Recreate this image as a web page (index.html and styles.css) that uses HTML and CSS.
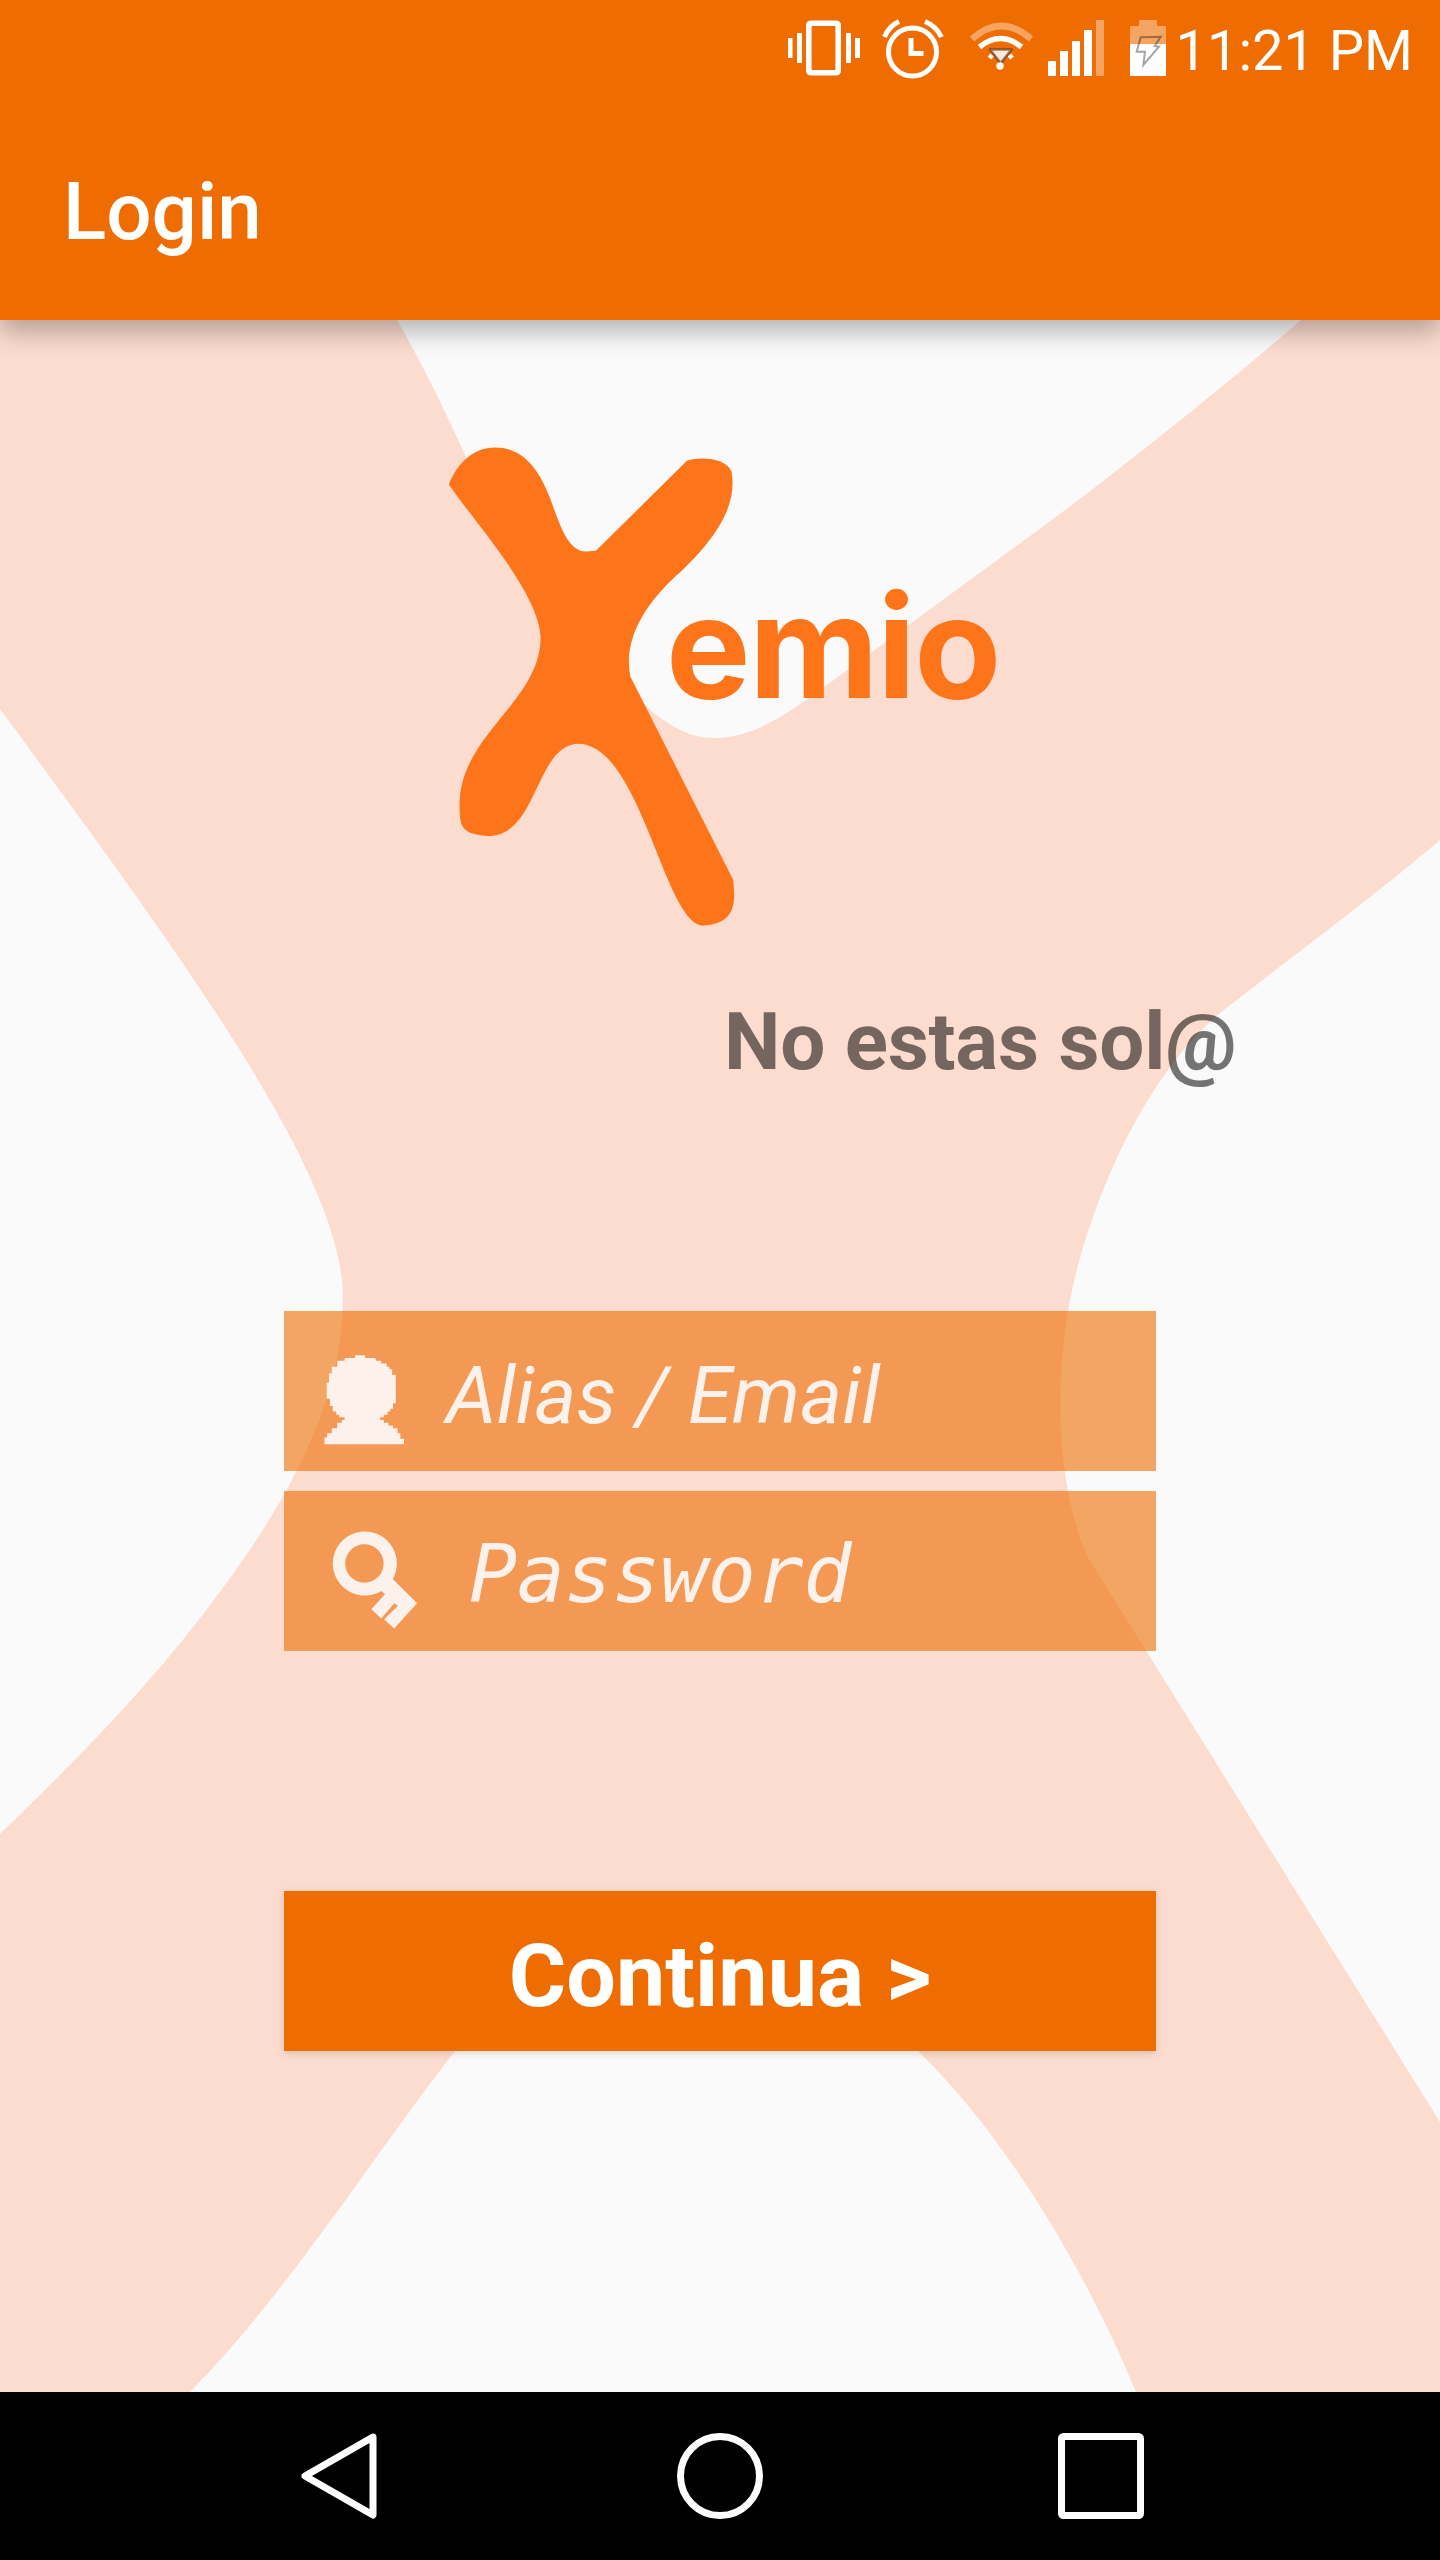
FILE: index.html
```html
<!DOCTYPE html>
<html lang="en">
<head>
  <meta charset="UTF-8" />
  <meta name="viewport" content="width=device-width, initial-scale=1.0"/>
  <title>Login</title>
  <link rel="stylesheet" href="styles.css">
</head>
<body>
  <div class="screen">

    <header class="app-header">
      <div class="status-bar">
        <svg class="status-icons" viewBox="785 16 385 64" width="385" height="64">
          <!-- vibrate -->
          <rect x="809.8" y="23.2" width="29.4" height="49.6" rx="2" fill="none" stroke="#fff" stroke-width="5.6"/>
          <path d="M789 38h4.500v20H789zM798 33h5v30h-5zM847 33h5v30h-5zM856 38h5v20h-5z" fill="#fff"/>
          <!-- alarm -->
          <circle cx="913.500" cy="52" r="24" fill="none" stroke="#fff" stroke-width="5"/>
          <path d="M912 38v15.500h12.500" fill="none" stroke="#fff" stroke-width="5"/>
          <path d="M885.500 37Q890 26 900 21.500M926 21.500Q937 26 942.500 37" fill="none" stroke="#fff" stroke-width="5"/>
          <!-- wifi -->
          <path d="M973 39Q1002 13 1032 39" fill="none" stroke="#fff" stroke-opacity=".38" stroke-width="6.500"/>
          <path d="M980.500 47Q1001.500 30 1022.500 47" fill="none" stroke="#fff" stroke-width="5.500"/>
          <path d="M990 55l3.500 3M1013.500 55l-3.500 3" fill="none" stroke="#fff" stroke-width="4"/>
          <path d="M991 49.500H1012.500L1001.700 63Z" fill="#fff" fill-opacity=".85" stroke="#3c2a20" stroke-opacity=".55" stroke-width="2.500" stroke-linejoin="round"/>
          <circle cx="1001" cy="66" r="3.700" fill="#fff"/>
          <!-- signal -->
          <path d="M1049 61h8v15h-8zM1061 51h8v25h-8zM1073 41h8v35h-8zM1085 30h8v46h-8z" fill="#fff"/>
          <path d="M1097 20h8v56h-8z" fill="#fff" fill-opacity=".38"/>
          <!-- battery -->
          <path d="M1140 20h18v6h9v18h-36v-18h9z" fill="#fff" fill-opacity=".38"/>
          <path d="M1131 44h36v32h-36z" fill="#fff"/>
          <path d="M1141.700 37.300L1161.700 36.700L1155.700 46L1160 46.700L1144.300 65L1146 51.700H1137.700Z" fill="none" stroke="#000" stroke-opacity=".35" stroke-width="2"/>
        </svg>
        <span class="clock">11:21 PM</span>
      </div>
      <div class="toolbar">Login</div>
    </header>

    <main class="login">
      <!-- pale X behind the form -->
      <svg class="login-bg" viewBox="0 320 1440 2072" preserveAspectRatio="none">
        <path d="M0 320H397C420 360 440 400 466 457L640 700C660 720 685 738 714 738C760 738 800 705 850 668L1041 528C1130 462 1220 390 1301 320H1440V840C1370 900 1300 950 1237 1000C1150 1060 1090 1200 1070 1300C1055 1380 1055 1480 1087 1556L1440 2122V2392H1136C1090 2280 1010 2140 918 2051L700 1950L640 1950L455 2051C370 2160 290 2290 190 2392H0V1834C60 1775 150 1690 230 1578C290 1495 343 1400 343 1298C343 1180 200 980 0 709Z" fill="#fcdccf"/>
      </svg>

      <div class="logo">
        <svg class="logo-x" viewBox="0 0 1568 1568" preserveAspectRatio="none">
          <path d="M73 187C95 125 135 80 190 80C260 80 300 140 330 230C355 310 375 382 420 382L445 380L675 118C715 105 775 112 788 150C800 230 770 320 660 440C590 510 510 620 532 745L792 1335C798 1400 800 1460 720 1468C620 1480 560 940 400 940C290 945 300 1210 170 1208C110 1200 100 1190 100 1120C100 910 305 820 305 630C300 500 140 300 73 187Z" fill="#fe7419"/>
        </svg>
        <span class="logo-name">emio</span>
      </div>

      <p class="tagline">No estas sol@</p>

      <div class="form">
        <div class="field">
          <svg class="field-icon user-icon" viewBox="705 775 175 196">
            <path d="M773 775H795V781H818V787H830V793H842V800H848V806H854V818H862V880H856V892H850V898H844V905H836V911H828V917H836V923H846V929H856V935H866V946H872V958H880V970H706V955H712V946H722V935H734V923H744V917H750V911H738V905H732V898H724V886H718V870H711V835H716V815H722V800H734V787H750V781H773Z"/>
          </svg>
          <span class="field-text">Alias / Email</span>
        </div>
        <div class="field">
          <svg class="field-icon key-icon" viewBox="720 1155 190 218">
            <path fill-rule="evenodd" d="M793 1158A70 70 0 0 1 855 1262L908 1315L858 1370L836 1350L866 1320L858 1315L830 1348L808 1328L838 1295L830 1288A70 70 0 1 1 793 1158ZM793 1186A42 42 0 1 0 793 1270A42 42 0 1 0 793 1186Z"/>
          </svg>
          <span class="field-text field-text-mono">Password</span>
        </div>
        <button class="submit">Continua &gt;</button>
      </div>
    </main>

    <nav class="nav-bar">
      <svg viewBox="0 0 76 86" width="76" height="86">
        <path d="M72 4L4 43L72 82Z" fill="none" stroke="#fff" stroke-width="7" stroke-linejoin="round"/>
      </svg>
      <svg viewBox="0 0 86 86" width="86" height="86">
        <circle cx="43" cy="43" r="39.500" fill="none" stroke="#fff" stroke-width="7"/>
      </svg>
      <svg viewBox="0 0 86 86" width="86" height="86">
        <rect x="3.500" y="3.500" width="79" height="79" rx="2" fill="none" stroke="#fff" stroke-width="7"/>
      </svg>
    </nav>

  </div>
</body>
</html>
```

FILE: styles.css
```css
body {
  margin: 0;
  font-family: 'Roboto', sans-serif;
  background-color: #fafafa;
}
.screen {
  display: flex;
  flex-direction: column;
  height: 2560px;
  overflow: hidden;
}

/* top orange area */
.app-header {
  position: relative;
  z-index: 1;
  background-color: #ef6c00;
  color: #fff;
  box-shadow: 0 12px 24px rgba(0,0,0,0.28);
}
.status-bar {
  display: flex;
  justify-content: flex-end;
  align-items: center;
  height: 96px;
  padding-right: 27px;
}
.status-icons {
  display: block;
}
.clock {
  margin-left: 6px;
  padding-top: 6px;
  font-size: 56px;
}
.toolbar {
  display: flex;
  align-items: center;
  height: 216px;
  padding: 8px 0 0 63px;
  font-size: 80px;
  font-weight: 500;
}

/* login body */
.login {
  position: relative;
  flex: 1;
  display: flex;
  flex-direction: column;
}
.login-bg {
  position: absolute;
  top: 0;
  left: 0;
  width: 100%;
  height: 100%;
}
.logo {
  position: relative;
  width: 620px;
  height: 540px;
  margin: 100px 0 0 420px;
}
.logo-x {
  display: block;
  width: 100%;
  height: 100%;
}
.logo-name {
  position: absolute;
  left: 246px;
  top: 155px;
  font-family: 'Inter', sans-serif;
  font-size: 142px;
  line-height: 142px;
  font-weight: 700;
  letter-spacing: -1.500px;
  color: #fe7419;
}
.tagline {
  position: relative;
  margin: 35px 0 0 724px;
  font-size: 80px;
  font-weight: 700;
  letter-spacing: -0.25px;
  color: rgba(0,0,0,0.54);
}
.form {
  position: relative;
  display: flex;
  flex-direction: column;
  gap: 20px;
  width: 872px;
  margin: 222px 0 0 284px;
}
.field {
  display: flex;
  align-items: center;
  height: 160px;
  background: rgba(239,108,0,0.6);
  color: #fdf2eb;
}
.field-icon {
  flex: none;
  margin-top: 18px;
  fill: #fdf2eb;
}
.user-icon {
  width: 80px;
  height: 90px;
  margin-left: 40px;
}
.key-icon {
  width: 87px;
  height: 100px;
  margin-left: 47px;
}
.field-text {
  margin-left: 42px;
  padding-top: 10px;
  font-size: 80px;
  font-style: italic;
}
.field-text-mono {
  margin-left: 51px;
  padding-top: 6px;
  letter-spacing: -0.4px;
  font-family: 'DejaVu Sans Mono', monospace;
}
.submit {
  height: 160px;
  margin-top: 220px;
  padding: 8px 0 0;
  border: none;
  background: #ef6c00;
  color: #fff;
  font-family: 'Roboto', sans-serif;
  font-size: 88px;
  font-weight: 700;
  box-shadow: 0 2px 8px rgba(0,0,0,0.15);
}

/* android buttons */
.nav-bar {
  display: grid;
  grid-template-columns: repeat(3, 381px);
  justify-content: center;
  justify-items: center;
  align-items: center;
  height: 168px;
  background: #000;
}
```
